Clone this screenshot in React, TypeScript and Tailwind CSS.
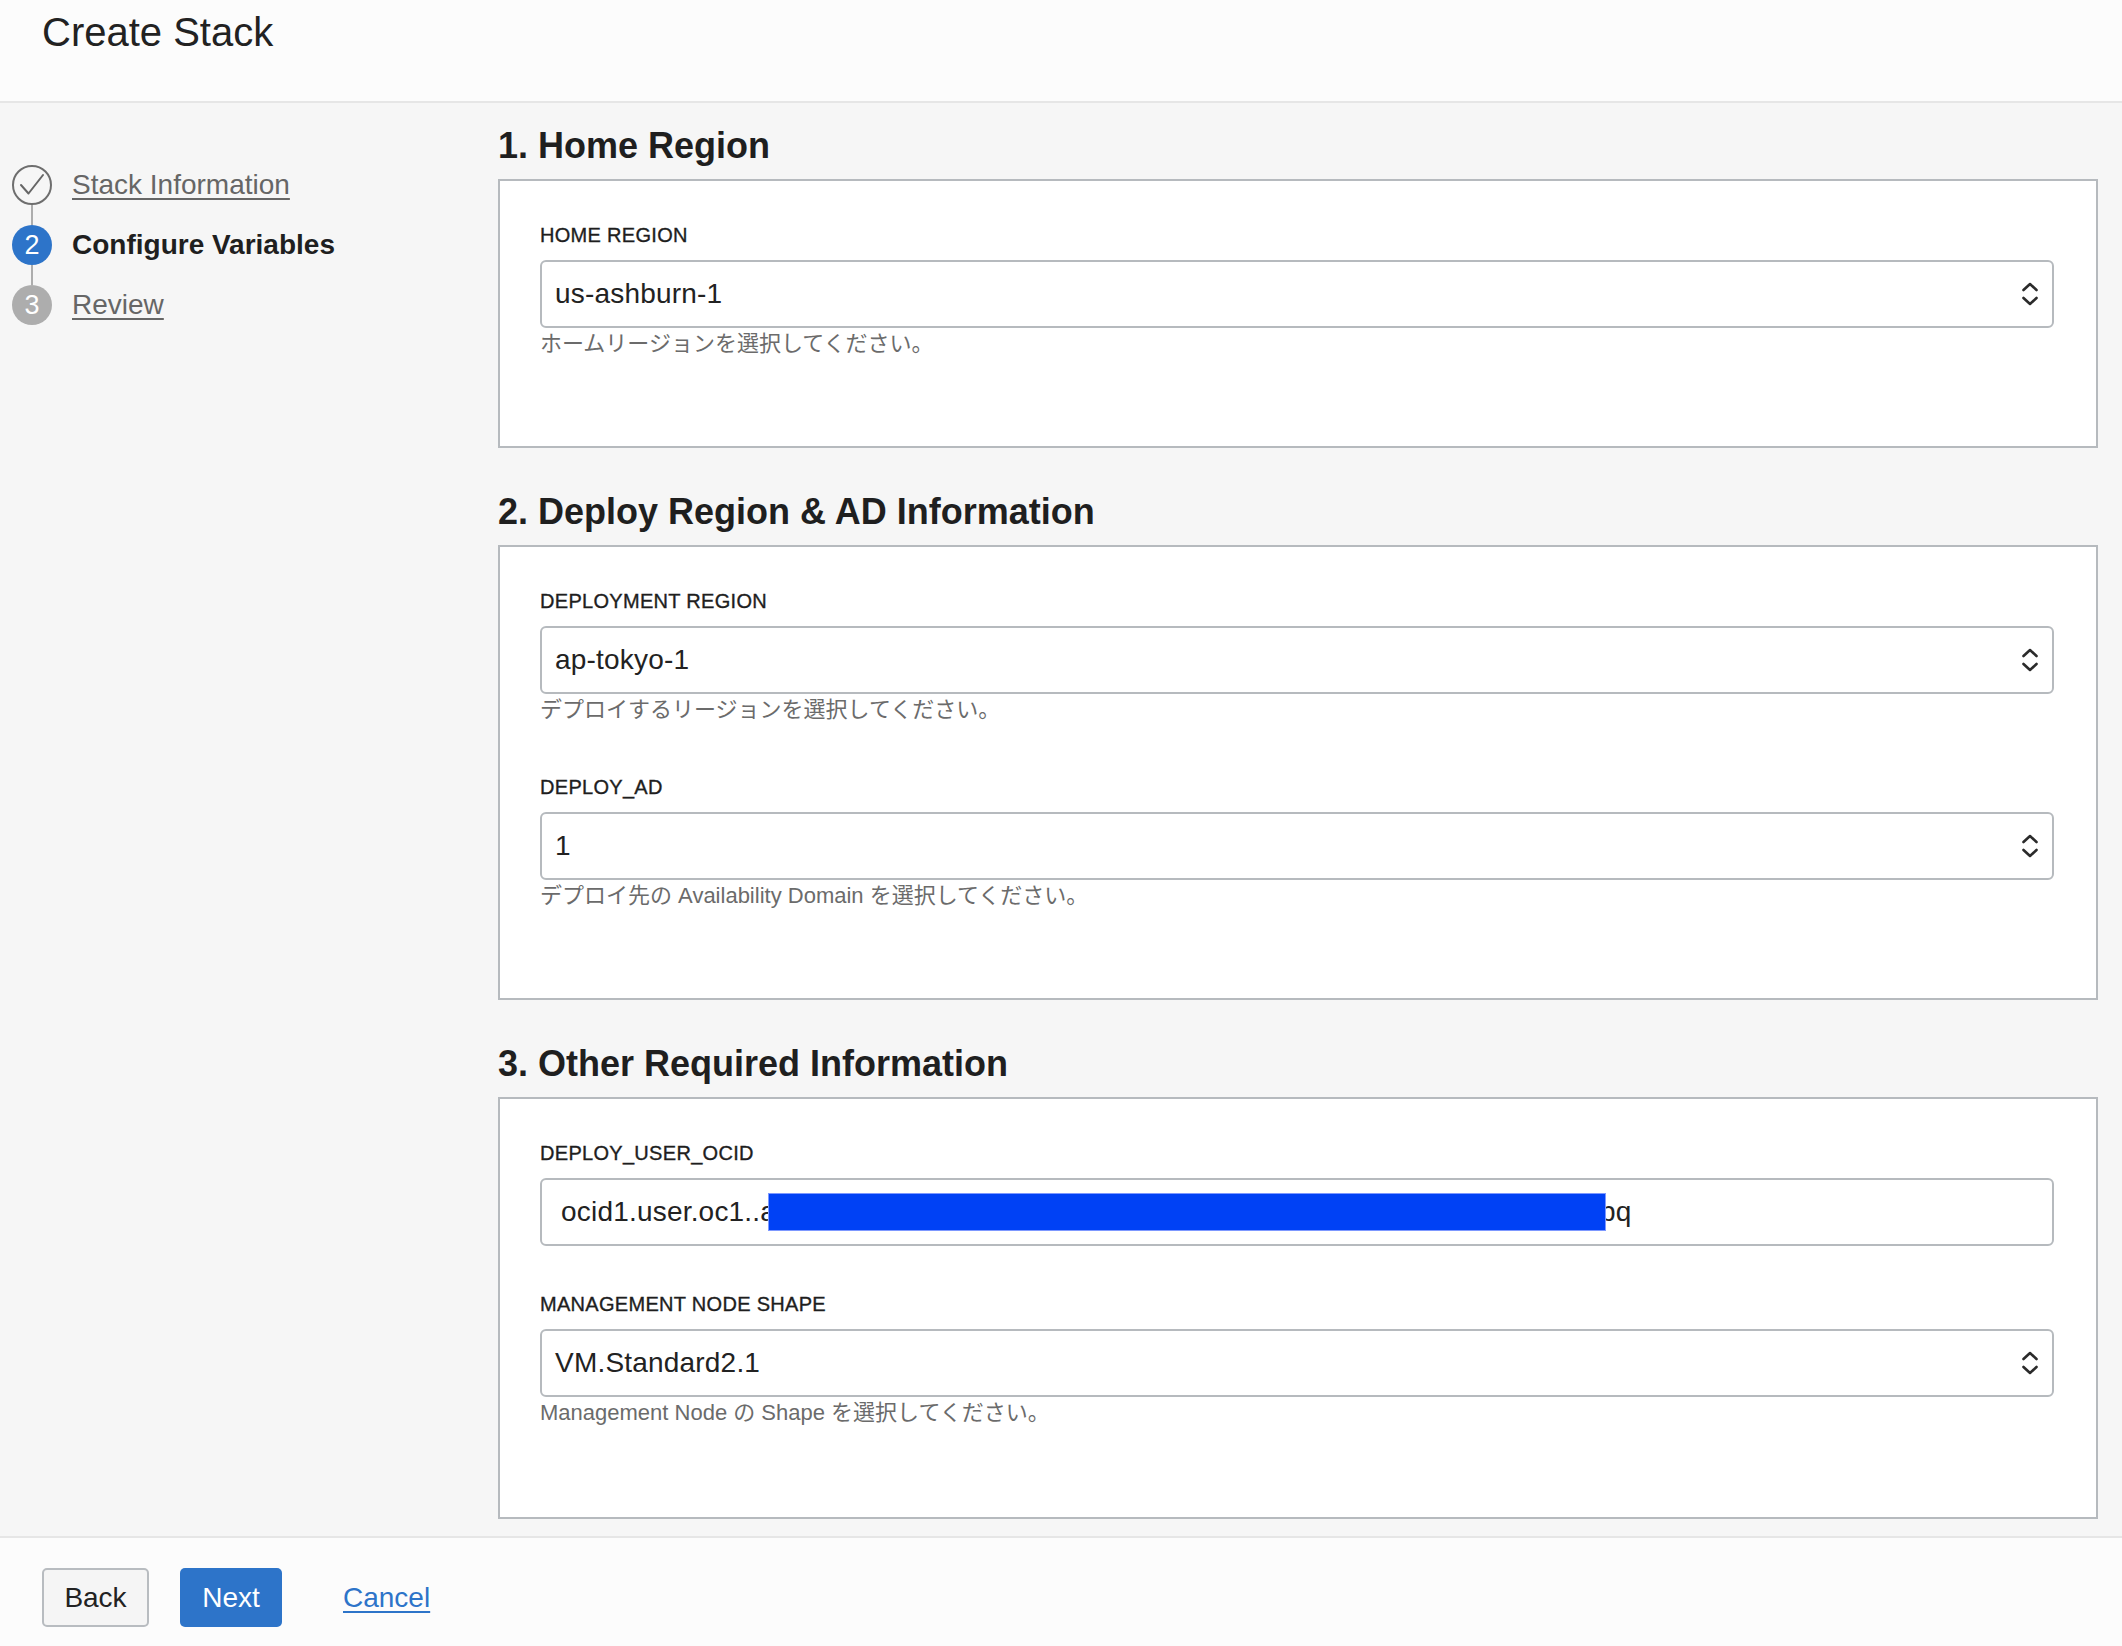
import React from "react";

const Chevrons = () => (
  <svg width="18" height="28" viewBox="0 0 18 28" fill="none" stroke="#2b2b2b" strokeWidth="2.6" strokeLinecap="round" strokeLinejoin="round">
    <polyline points="2.5,10 9,4 15.5,10" />
    <polyline points="2.5,18 9,24 15.5,18" />
  </svg>
);

const SelectBox = ({ value }: { value: string }) => (
  <div className="flex h-[68px] items-center justify-between rounded-[6px] border-2 border-[#b6babe] bg-white pl-[13px] pr-[13px]">
    <span className="text-[28px] leading-[34px] tracking-[0.2px] text-[#222]">{value}</span>
    <Chevrons />
  </div>
);

const Field = ({
  label,
  help,
  mt,
  children,
}: {
  label: string;
  help?: string;
  mt: string;
  children: React.ReactNode;
}) => (
  <div className={mt}>
    <div className="mb-[11px] text-[20px] leading-[28px] tracking-[0.3px] text-[#1e1e1e] [-webkit-text-stroke:0.35px_#1e1e1e]">{label}</div>
    {children}
    {help && <div className="mt-[2px] text-[22px] leading-[28px] text-[#6b6b6b]">{help}</div>}
  </div>
);

const Section = ({
  title,
  mt,
  pb,
  children,
}: {
  title: string;
  mt: string;
  pb: string;
  children: React.ReactNode;
}) => (
  <section className={mt}>
    <h2 className="mb-[13px] text-[36px] font-bold leading-[40px] text-[#1f1f1f]">{title}</h2>
    <div className={`border-2 border-[#b6babe] bg-white pl-[40px] pr-[42px] pt-[40px] ${pb}`}>{children}</div>
  </section>
);

const StepLine = () => <div className="ml-[19px] h-[20px] w-[2px] bg-[#adadad]" />;

export default function App() {
  return (
    <div className="flex h-screen w-full flex-col overflow-hidden bg-[#f6f6f6] [font-family:'Liberation_Sans','Noto_Sans_CJK_JP',sans-serif] text-[#222]">
      <header className="h-[103px] shrink-0 border-b-2 border-[#e6e6e6] bg-[#fcfcfc] pl-[42px] pt-[8px]">
        <h1 className="text-[40px] leading-[48px] text-[#222]">Create Stack</h1>
      </header>

      <div className="flex min-h-0 flex-1 overflow-hidden">
        <aside className="w-[498px] shrink-0 pl-[12px] pt-[62px]">
          <div className="flex h-[40px] items-center gap-[20px]">
            <div className="flex h-[40px] w-[40px] items-center justify-center rounded-full border-2 border-[#6e6e6e]">
              <svg width="36" height="36" viewBox="0 0 36 36" fill="none" stroke="#666" strokeWidth="2" strokeLinecap="round" strokeLinejoin="round">
                <polyline points="7,18 14.5,26.5 29,8" />
              </svg>
            </div>
            <span className="text-[28px] leading-[40px] text-[#666] underline decoration-[1.5px] underline-offset-[4px]">Stack Information</span>
          </div>
          <StepLine />
          <div className="flex h-[40px] items-center gap-[20px]">
            <div className="flex h-[40px] w-[40px] items-center justify-center rounded-full bg-[#2d74c9] text-[27px] leading-none text-white">2</div>
            <span className="text-[28px] font-bold leading-[40px] text-[#1f1f1f]">Configure Variables</span>
          </div>
          <StepLine />
          <div className="flex h-[40px] items-center gap-[20px]">
            <div className="flex h-[40px] w-[40px] items-center justify-center rounded-full bg-[#adadad] text-[27px] leading-none text-white">3</div>
            <span className="text-[28px] leading-[40px] text-[#666] underline decoration-[1.5px] underline-offset-[4px]">Review</span>
          </div>
        </aside>

        <main className="min-w-0 flex-1 pr-[24px] pt-[23px]">
          <Section title="1. Home Region" mt="" pb="pb-[88px]">
            <Field label="HOME REGION" help="ホームリージョンを選択してください。" mt="">
              <SelectBox value="us-ashburn-1" />
            </Field>
          </Section>

          <Section title="2. Deploy Region & AD Information" mt="mt-[44px]" pb="pb-[88px]">
            <Field label="DEPLOYMENT REGION" help="デプロイするリージョンを選択してください。" mt="">
              <SelectBox value="ap-tokyo-1" />
            </Field>
            <Field label="DEPLOY_AD" help="デプロイ先の Availability Domain を選択してください。" mt="mt-[49px]">
              <SelectBox value="1" />
            </Field>
          </Section>

          <Section title="3. Other Required Information" mt="mt-[44px]" pb="pb-[90px]">
            <Field label="DEPLOY_USER_OCID" mt="">
              <div className="flex h-[68px] items-center rounded-[6px] border-2 border-[#b6babe] bg-white pl-[19px]">
                <span className="whitespace-nowrap text-[28px] leading-[34px] tracking-[0.2px] text-[#222]">ocid1.user.oc1..a</span>
                <span className="relative z-10 -ml-[8px] inline-block h-[38px] w-[838px] border border-[#7d98ff] bg-[#0041f5]" />
                <span className="-ml-[6px] whitespace-nowrap text-[28px] leading-[34px] text-[#222]">pq</span>
              </div>
            </Field>
            <Field label="MANAGEMENT NODE SHAPE" help="Management Node の Shape を選択してください。" mt="mt-[44px]">
              <SelectBox value="VM.Standard2.1" />
            </Field>
          </Section>
        </main>
      </div>

      <footer className="flex h-[110px] shrink-0 items-start gap-0 border-t-2 border-[#e6e6e6] bg-[#fcfcfc] pl-[42px] pt-[30px]">
        <button className="h-[59px] w-[107px] rounded-[5px] border-2 border-[#b8bcc0] bg-[#f5f5f5] text-[28px] text-[#222]">Back</button>
        <button className="ml-[31px] h-[59px] w-[102px] rounded-[5px] bg-[#2d74c9] text-[28px] text-white">Next</button>
        <a className="ml-[61px] flex h-[59px] items-center text-[28px] text-[#2d74c9] underline decoration-[1.5px] underline-offset-[4px]">Cancel</a>
      </footer>
    </div>
  );
}
